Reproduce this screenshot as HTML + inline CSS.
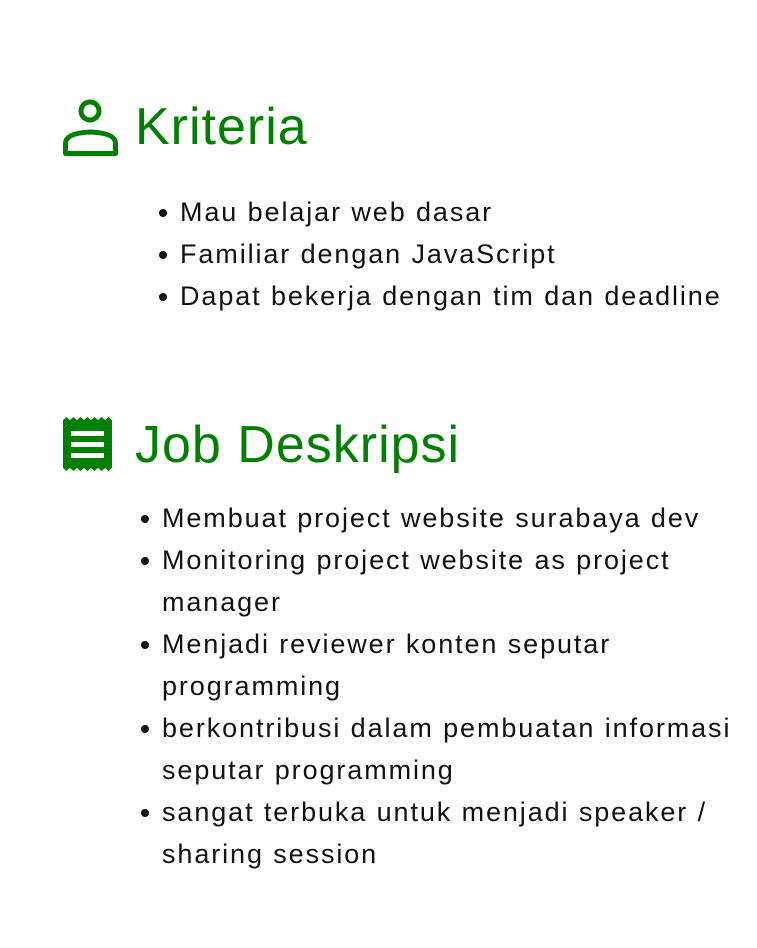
<!DOCTYPE html>
<html><head><style>
body{margin:0;width:757px;height:948px;background:#fff;position:relative;font-family:"Liberation Sans",sans-serif;overflow:hidden}
.h{position:absolute;left:135px;color:#008000;font-size:52px;letter-spacing:1px;line-height:52px;white-space:nowrap}
.l{position:absolute;font-size:27px;letter-spacing:1.9px;color:#111;white-space:nowrap;line-height:42px}
.l div{position:relative}
.l div:before{content:"";position:absolute;left:-21px;top:18px;width:8px;height:8px;border-radius:50%;background:#111}
</style></head><body>
<svg style="position:absolute;left:60px;top:96px" width="64" height="64" viewBox="60 96 64 64">
<circle cx="90" cy="111" r="9" fill="none" stroke="#008000" stroke-width="5"/>
<path d="M65.5 153.5 V143 Q66 133 90.5 132 Q115 133 115.5 143 V153.5 Z" fill="none" stroke="#008000" stroke-width="5" stroke-linejoin="round"/>
</svg>
<div class="h" style="top:101px">Kriteria</div>
<div class="l" style="left:180px;top:191px">
<div>Mau belajar web dasar</div>
<div>Familiar dengan JavaScript</div>
<div>Dapat bekerja dengan tim dan deadline</div>
</div>
<svg style="position:absolute;left:60px;top:414px" width="60" height="60" viewBox="60 414 60 60">
<path d="M63 420 l3.5 -3 3.5 3 3.5 -3 3.5 3 3.5 -3 3.5 3 3.5 -3 3.5 3 3.5 -3 3.5 3 3.5 -3 3.5 3 3.5 -3 3.5 3 V468 l-3.5 3 -3.5 -3 -3.5 3 -3.5 -3 -3.5 3 -3.5 -3 -3.5 3 -3.5 -3 -3.5 3 -3.5 -3 -3.5 3 -3.5 -3 -3.5 3 -3.5 -3 Z" fill="#008000"/>
<rect x="71" y="431" width="33" height="5" fill="#fff"/>
<rect x="71" y="442" width="33" height="5" fill="#fff"/>
<rect x="71" y="453" width="33" height="5" fill="#fff"/>
</svg>
<div class="h" style="top:419px">Job Deskripsi</div>
<div class="l" style="left:162px;top:497px">
<div>Membuat project website surabaya dev</div>
<div>Monitoring project website as project<br>manager</div>
<div>Menjadi reviewer konten seputar<br>programming</div>
<div>berkontribusi dalam pembuatan informasi<br>seputar programming</div>
<div>sangat terbuka untuk menjadi speaker /<br>sharing session</div>
</div>
</body></html>
